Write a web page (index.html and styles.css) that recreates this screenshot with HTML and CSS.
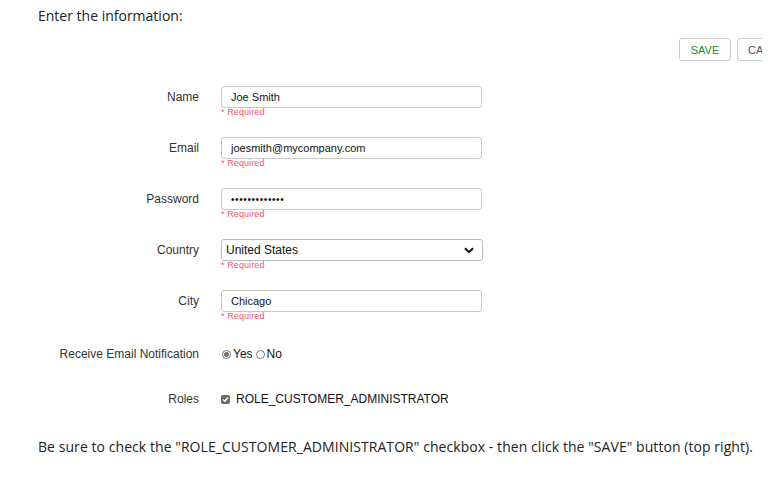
FILE: index.html
```html
<!DOCTYPE html>
<html>
<head>
<meta charset="utf-8">
<link rel="stylesheet" href="styles.css">
</head>
<body>
<div class="page">
  <p class="intro">Enter the information:</p>
  <div class="toolbar">
    <button class="btn btn-save">SAVE</button>
    <button class="btn btn-cancel">CANCEL</button>
  </div>
  <form class="form">
    <div class="row">
      <label class="label">Name</label>
      <div class="field">
        <input class="input" type="text" value="Joe Smith">
        <span class="req">* Required</span>
      </div>
    </div>
    <div class="row">
      <label class="label">Email</label>
      <div class="field">
        <input class="input" type="text" value="joesmith@mycompany.com">
        <span class="req">* Required</span>
      </div>
    </div>
    <div class="row">
      <label class="label">Password</label>
      <div class="field">
        <input class="input pw" type="password" value="joesmith12345">
        <span class="req">* Required</span>
      </div>
    </div>
    <div class="row">
      <label class="label">Country</label>
      <div class="field">
        <div class="select">
          <span>United States</span>
          <svg class="chev" width="10" height="7" viewBox="0 0 10 7"><path d="M1 1.2 L5 5.2 L9 1.2" fill="none" stroke="#111" stroke-width="2"/></svg>
        </div>
        <span class="req">* Required</span>
      </div>
    </div>
    <div class="row">
      <label class="label">City</label>
      <div class="field">
        <input class="input" type="text" value="Chicago">
        <span class="req">* Required</span>
      </div>
    </div>
    <div class="row row-radio">
      <label class="label">Receive Email Notification</label>
      <div class="field inline">
        <span class="radio checked"></span><span class="opt">Yes</span>
        <span class="radio"></span><span class="opt">No</span>
      </div>
    </div>
    <div class="row row-roles">
      <label class="label">Roles</label>
      <div class="field inline">
        <span class="check"><svg width="7" height="7" viewBox="0 0 7 7"><path d="M1 3.6 L2.8 5.3 L6 1.5" fill="none" stroke="#fff" stroke-width="1.4"/></svg></span>
        <span class="role">ROLE_CUSTOMER_ADMINISTRATOR</span>
      </div>
    </div>
  </form>
  <p class="outro">Be sure to check the "ROLE_CUSTOMER_ADMINISTRATOR" checkbox - then click the "SAVE" button (top right).</p>
</div>
</body>
</html>
```
FILE: styles.css
```css
html, body {
  margin: 0;
  padding: 0;
  background: #fff;
}
.page {
  width: 762px;
  overflow: hidden;
  font-family: "Open Sans", "Liberation Sans", sans-serif;
  color: #222;
}
.intro {
  margin: 0;
  padding: 7px 0 0 38px;
  font-size: 14px;
  line-height: 18px;
  letter-spacing: 0;
}
.toolbar {
  display: flex;
  justify-content: flex-end;
  gap: 6px;
  margin: 13px -41px 0 0;
  height: 23px;
}
.btn {
  font-family: "Liberation Sans", Arial, sans-serif;
  font-size: 11px;
  background: #fff;
  border: 1px solid #ccc;
  border-radius: 3px;
  height: 23px;
  padding: 0 10px;
  cursor: pointer;
}
.btn-save {
  color: #1a8a1a;
  width: 52px;
}
.btn-cancel {
  color: #555;
  width: 66px;
}
.form {
  margin-top: 25px;
  font-family: "Liberation Sans", Arial, sans-serif;
}
.row {
  display: grid;
  grid-template-columns: 199px 261px;
  column-gap: 22px;
  height: 51px;
}
.label {
  text-align: right;
  font-size: 12px;
  color: #333;
  line-height: 22px;
}
.field {
  display: flex;
  flex-direction: column;
}
.input {
  box-sizing: border-box;
  width: 261px;
  height: 22px;
  border: 1px solid #c8c8c8;
  border-radius: 3px;
  padding: 0 9px;
  font-family: "Liberation Sans", Arial, sans-serif;
  font-size: 11px;
  color: #111;
  outline: none;
}
.pw {
  font-size: 10px;
  letter-spacing: 0.6px;
}
.select {
  box-sizing: border-box;
  width: 262px;
  height: 22px;
  border: 1px solid #b8b8b8;
  border-radius: 3px;
  padding: 0 8px 0 4px;
  display: flex;
  align-items: center;
  justify-content: space-between;
  font-size: 12px;
  color: #111;
}
.req {
  font-size: 9px;
  color: #f5566a;
  line-height: 9px;
  letter-spacing: 0.1px;
}
.row-radio {
  height: 45px;
  padding-top: 2px;
}
.row-roles {
  height: 46px;
}
.inline {
  flex-direction: row;
  align-items: center;
  font-size: 12px;
  color: #111;
  height: 22px;
}
.radio {
  box-sizing: border-box;
  width: 9px;
  height: 9px;
  border: 1px solid #777;
  border-radius: 50%;
  margin: 0 2px 0 1px;
  display: inline-block;
}
.radio.checked {
  background: radial-gradient(circle, #777 0 2.2px, #fff 2.6px);
}
.opt {
  margin-right: 2px;
}
.check {
  width: 9px;
  height: 9px;
  background: #6b6b6b;
  border-radius: 2px;
  display: inline-flex;
  align-items: center;
  justify-content: center;
  margin: 0 6px 0 0;
}
.role {
  font-size: 12px;
  color: #111;
}
.outro {
  margin: 4px 0 0 38px;
  font-size: 14px;
  line-height: 18px;
  white-space: nowrap;
  letter-spacing: 0.06px;
}
```
